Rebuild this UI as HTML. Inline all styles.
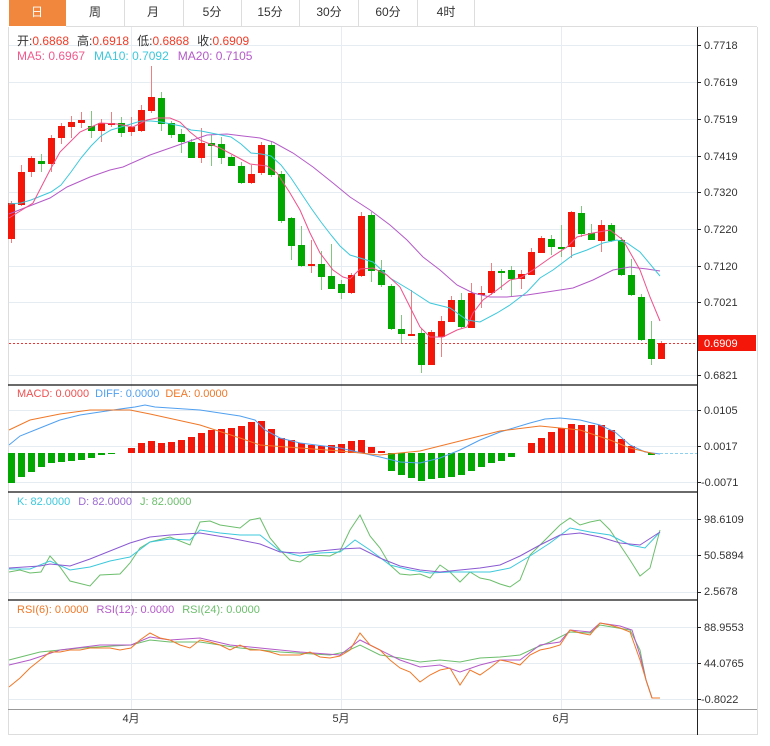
<!DOCTYPE html>
<html><head><meta charset="utf-8"><style>
html,body{margin:0;padding:0;background:#fff;width:770px;height:746px;overflow:hidden}
svg{display:block}
text{font-family:"Liberation Sans","Noto Sans CJK SC",sans-serif}
</style></head><body>
<svg width="770" height="746" viewBox="0 0 770 746" xmlns="http://www.w3.org/2000/svg">
<rect x="9" y="0" width="57" height="26" fill="#f0873c"/>
<g stroke="#ddd" stroke-width="1">
<line x1="124.5" y1="0" x2="124.5" y2="26"/><line x1="183.5" y1="0" x2="183.5" y2="26"/><line x1="241.5" y1="0" x2="241.5" y2="26"/><line x1="299.5" y1="0" x2="299.5" y2="26"/><line x1="358.5" y1="0" x2="358.5" y2="26"/><line x1="417.5" y1="0" x2="417.5" y2="26"/><line x1="474.5" y1="0" x2="474.5" y2="26"/>
<line x1="66" y1="26.5" x2="757" y2="26.5"/>
</g>
<g font-size="12" fill="#333" text-anchor="middle">
<text x="37" y="16" fill="#fff">日</text><text x="95" y="16">周</text><text x="153" y="16">月</text><text x="212" y="16">5分</text><text x="270" y="16">15分</text><text x="329" y="16">30分</text><text x="388" y="16">60分</text><text x="446" y="16">4时</text>
</g>
<g stroke="#ddd" fill="none"><line x1="8.5" y1="27" x2="8.5" y2="735"/><line x1="757.5" y1="27" x2="757.5" y2="735"/><line x1="8" y1="734.5" x2="758" y2="734.5"/></g>
<g stroke="#e6edf2" stroke-width="1">
<line x1="9" y1="45.5" x2="697" y2="45.5"/><line x1="9" y1="82.5" x2="697" y2="82.5"/><line x1="9" y1="119.5" x2="697" y2="119.5"/><line x1="9" y1="156.5" x2="697" y2="156.5"/><line x1="9" y1="192.5" x2="697" y2="192.5"/><line x1="9" y1="229.5" x2="697" y2="229.5"/><line x1="9" y1="266.5" x2="697" y2="266.5"/><line x1="9" y1="302.5" x2="697" y2="302.5"/><line x1="9" y1="339.5" x2="697" y2="339.5"/><line x1="9" y1="375.5" x2="697" y2="375.5"/>
<line x1="9" y1="410.5" x2="697" y2="410.5"/><line x1="9" y1="446.5" x2="697" y2="446.5"/><line x1="9" y1="482.5" x2="697" y2="482.5"/>
<line x1="9" y1="519.5" x2="697" y2="519.5"/><line x1="9" y1="555.5" x2="697" y2="555.5"/><line x1="9" y1="592.5" x2="697" y2="592.5"/>
<line x1="9" y1="627.5" x2="697" y2="627.5"/><line x1="9" y1="663.5" x2="697" y2="663.5"/><line x1="9" y1="699.5" x2="697" y2="699.5"/>
<line x1="131.5" y1="27" x2="131.5" y2="709"/><line x1="341.5" y1="27" x2="341.5" y2="709"/><line x1="561.5" y1="27" x2="561.5" y2="709"/>
</g>
<g stroke="#111" stroke-width="1.3"><line x1="8" y1="385" x2="697" y2="385"/><line x1="8" y1="492" x2="697" y2="492"/><line x1="8" y1="600" x2="697" y2="600"/></g>
<line x1="8" y1="709.5" x2="757" y2="709.5" stroke="#999"/>
<line x1="697.5" y1="27" x2="697.5" y2="735" stroke="#222"/>
<g stroke="#222"><line x1="697" y1="45.5" x2="701" y2="45.5"/><line x1="697" y1="82.5" x2="701" y2="82.5"/><line x1="697" y1="119.5" x2="701" y2="119.5"/><line x1="697" y1="156.5" x2="701" y2="156.5"/><line x1="697" y1="192.5" x2="701" y2="192.5"/><line x1="697" y1="229.5" x2="701" y2="229.5"/><line x1="697" y1="266.5" x2="701" y2="266.5"/><line x1="697" y1="302.5" x2="701" y2="302.5"/><line x1="697" y1="375.5" x2="701" y2="375.5"/><line x1="697" y1="410.5" x2="701" y2="410.5"/><line x1="697" y1="446.5" x2="701" y2="446.5"/><line x1="697" y1="482.5" x2="701" y2="482.5"/><line x1="697" y1="519.5" x2="701" y2="519.5"/><line x1="697" y1="555.5" x2="701" y2="555.5"/><line x1="697" y1="592.5" x2="701" y2="592.5"/><line x1="697" y1="627.5" x2="701" y2="627.5"/><line x1="697" y1="663.5" x2="701" y2="663.5"/><line x1="697" y1="699.5" x2="701" y2="699.5"/></g>
<g font-size="11" fill="#333">
<text x="704" y="49">0.7718</text><text x="704" y="86">0.7619</text><text x="704" y="123">0.7519</text><text x="704" y="160">0.7419</text><text x="704" y="196">0.7320</text><text x="704" y="233">0.7220</text><text x="704" y="270">0.7120</text><text x="704" y="306">0.7021</text><text x="704" y="379">0.6821</text>
<text x="704" y="414">0.0105</text><text x="704" y="450">0.0017</text><text x="701" y="486">-0.0071</text>
<text x="704" y="523">98.6109</text><text x="704" y="559">50.5894</text><text x="704" y="595">2.5678</text>
<text x="704" y="631">88.9553</text><text x="704" y="667">44.0765</text><text x="701" y="703">-0.8022</text>
</g>
<g font-size="11" fill="#333" text-anchor="middle"><text x="131" y="722">4月</text><text x="341" y="722">5月</text><text x="561" y="722">6月</text></g>
<line x1="9" y1="343.5" x2="697" y2="343.5" stroke="#e33" stroke-dasharray="2,2"/>
<rect x="698" y="335" width="58" height="16" fill="#f5160a"/>
<text x="704" y="347" font-size="11" fill="#fff">0.6909</text>
<g font-size="12">
<text x="17" y="45"><tspan fill="#333">开:</tspan><tspan fill="#f03c28">0.6868</tspan><tspan fill="#333" dx="8">高:</tspan><tspan fill="#f03c28">0.6918</tspan><tspan fill="#333" dx="8">低:</tspan><tspan fill="#f03c28">0.6868</tspan><tspan fill="#333" dx="8">收:</tspan><tspan fill="#f03c28">0.6909</tspan></text>
<text x="17" y="60"><tspan fill="#f05a8c">MA5: 0.6967</tspan><tspan fill="#3cc8dc" dx="9">MA10: 0.7092</tspan><tspan fill="#b45ac8" dx="9">MA20: 0.7105</tspan></text>
</g>
<g font-size="11">
<text x="17" y="397"><tspan fill="#f05050">MACD: 0.0000</tspan><tspan fill="#50a0f0" dx="6">DIFF: 0.0000</tspan><tspan fill="#f07828" dx="6">DEA: 0.0000</tspan></text>
<text x="17" y="505"><tspan fill="#3cc8dc">K: 82.0000</tspan><tspan fill="#9b6ad2" dx="8">D: 82.0000</tspan><tspan fill="#6cbe6c" dx="8">J: 82.0000</tspan></text>
<text x="17" y="613"><tspan fill="#f07828">RSI(6): 0.0000</tspan><tspan fill="#b45ac8" dx="8">RSI(12): 0.0000</tspan><tspan fill="#6cbe6c" dx="8">RSI(24): 0.0000</tspan></text>
</g>
<g stroke-width="1">
<g stroke="#f08080" fill="#f5160a">
<line x1="11.5" y1="201" x2="11.5" y2="243"/><rect x="8" y="203" width="7" height="36" stroke="none"/>
<line x1="21.5" y1="165" x2="21.5" y2="206"/><rect x="18" y="172" width="7" height="33" stroke="none"/>
<line x1="31.5" y1="156" x2="31.5" y2="177"/><rect x="28" y="158" width="7" height="14" stroke="none"/>
<line x1="51.5" y1="135" x2="51.5" y2="172"/><rect x="48" y="138" width="7" height="26" stroke="none"/>
<line x1="61.5" y1="123" x2="61.5" y2="144"/><rect x="58" y="126" width="7" height="12" stroke="none"/>
<line x1="71.5" y1="116" x2="71.5" y2="138"/><rect x="68" y="122" width="7" height="5" stroke="none"/>
<line x1="81.5" y1="112" x2="81.5" y2="128"/><rect x="78" y="120" width="7" height="3" stroke="none"/>
<line x1="101.5" y1="119" x2="101.5" y2="142"/><rect x="98" y="123" width="7" height="8" stroke="none"/>
<line x1="111.5" y1="112" x2="111.5" y2="127"/><rect x="108" y="123" width="7" height="2" stroke="none"/>
<line x1="131.5" y1="117" x2="131.5" y2="136"/><rect x="128" y="127" width="7" height="5" stroke="none"/>
<line x1="141.5" y1="105" x2="141.5" y2="132"/><rect x="138" y="110" width="7" height="21" stroke="none"/>
<line x1="151.5" y1="66" x2="151.5" y2="113"/><rect x="148" y="97" width="7" height="14" stroke="none"/>
<line x1="201.5" y1="128" x2="201.5" y2="163"/><rect x="198" y="143" width="7" height="15" stroke="none"/>
<line x1="251.5" y1="165" x2="251.5" y2="184"/><rect x="248" y="174" width="7" height="9" stroke="none"/>
<line x1="261.5" y1="142" x2="261.5" y2="175"/><rect x="258" y="145" width="7" height="28" stroke="none"/>
<line x1="311.5" y1="240" x2="311.5" y2="273"/><rect x="308" y="264" width="7" height="2" stroke="none"/>
<line x1="351.5" y1="273" x2="351.5" y2="294"/><rect x="348" y="275" width="7" height="18" stroke="none"/>
<line x1="361.5" y1="212" x2="361.5" y2="277"/><rect x="358" y="216" width="7" height="60" stroke="none"/>
<line x1="411.5" y1="290" x2="411.5" y2="336"/><rect x="408" y="334" width="7" height="2" stroke="none"/>
<line x1="431.5" y1="330" x2="431.5" y2="365"/><rect x="428" y="332" width="7" height="33" stroke="none"/>
<line x1="441.5" y1="316" x2="441.5" y2="357"/><rect x="438" y="321" width="7" height="16" stroke="none"/>
<line x1="451.5" y1="296" x2="451.5" y2="322"/><rect x="448" y="300" width="7" height="22" stroke="none"/>
<line x1="471.5" y1="283" x2="471.5" y2="328"/><rect x="468" y="293" width="7" height="35" stroke="none"/>
<line x1="481.5" y1="286" x2="481.5" y2="308"/><rect x="478" y="293" width="7" height="2" stroke="none"/>
<line x1="491.5" y1="263" x2="491.5" y2="295"/><rect x="488" y="271" width="7" height="22" stroke="none"/>
<line x1="521.5" y1="270" x2="521.5" y2="289"/><rect x="518" y="274" width="7" height="5" stroke="none"/>
<line x1="531.5" y1="248" x2="531.5" y2="275"/><rect x="528" y="252" width="7" height="23" stroke="none"/>
<line x1="541.5" y1="236" x2="541.5" y2="253"/><rect x="538" y="238" width="7" height="15" stroke="none"/>
<line x1="571.5" y1="211" x2="571.5" y2="258"/><rect x="568" y="212" width="7" height="35" stroke="none"/>
<line x1="601.5" y1="220" x2="601.5" y2="252"/><rect x="598" y="225" width="7" height="16" stroke="none"/>
<line x1="661.5" y1="341" x2="661.5" y2="359"/><rect x="658" y="343" width="7" height="16" stroke="none"/>
</g>
<g stroke="#80c880" fill="#00a800">
<line x1="41.5" y1="154" x2="41.5" y2="172"/><rect x="38" y="161" width="7" height="3" stroke="none"/>
<line x1="91.5" y1="111" x2="91.5" y2="138"/><rect x="88" y="126" width="7" height="5" stroke="none"/>
<line x1="121.5" y1="117" x2="121.5" y2="137"/><rect x="118" y="123" width="7" height="10" stroke="none"/>
<line x1="161.5" y1="92" x2="161.5" y2="131"/><rect x="158" y="98" width="7" height="26" stroke="none"/>
<line x1="171.5" y1="121" x2="171.5" y2="138"/><rect x="168" y="123" width="7" height="12" stroke="none"/>
<line x1="181.5" y1="129" x2="181.5" y2="153"/><rect x="178" y="134" width="7" height="8" stroke="none"/>
<line x1="191.5" y1="139" x2="191.5" y2="158"/><rect x="188" y="142" width="7" height="16" stroke="none"/>
<line x1="211.5" y1="135" x2="211.5" y2="166"/><rect x="208" y="143" width="7" height="3" stroke="none"/>
<line x1="221.5" y1="137" x2="221.5" y2="164"/><rect x="218" y="144" width="7" height="14" stroke="none"/>
<line x1="231.5" y1="155" x2="231.5" y2="166"/><rect x="228" y="157" width="7" height="9" stroke="none"/>
<line x1="241.5" y1="162" x2="241.5" y2="184"/><rect x="238" y="166" width="7" height="17" stroke="none"/>
<line x1="271.5" y1="142" x2="271.5" y2="177"/><rect x="268" y="145" width="7" height="30" stroke="none"/>
<line x1="281.5" y1="171" x2="281.5" y2="223"/><rect x="278" y="174" width="7" height="47" stroke="none"/>
<line x1="291.5" y1="217" x2="291.5" y2="260"/><rect x="288" y="218" width="7" height="28" stroke="none"/>
<line x1="301.5" y1="226" x2="301.5" y2="267"/><rect x="298" y="245" width="7" height="21" stroke="none"/>
<line x1="321.5" y1="251" x2="321.5" y2="290"/><rect x="318" y="264" width="7" height="13" stroke="none"/>
<line x1="331.5" y1="244" x2="331.5" y2="289"/><rect x="328" y="276" width="7" height="13" stroke="none"/>
<line x1="341.5" y1="280" x2="341.5" y2="299"/><rect x="338" y="284" width="7" height="9" stroke="none"/>
<line x1="371.5" y1="212" x2="371.5" y2="282"/><rect x="368" y="215" width="7" height="56" stroke="none"/>
<line x1="381.5" y1="260" x2="381.5" y2="287"/><rect x="378" y="270" width="7" height="15" stroke="none"/>
<line x1="391.5" y1="284" x2="391.5" y2="330"/><rect x="388" y="286" width="7" height="43" stroke="none"/>
<line x1="401.5" y1="315" x2="401.5" y2="343"/><rect x="398" y="329" width="7" height="5" stroke="none"/>
<line x1="421.5" y1="329" x2="421.5" y2="373"/><rect x="418" y="333" width="7" height="32" stroke="none"/>
<line x1="461.5" y1="293" x2="461.5" y2="328"/><rect x="458" y="300" width="7" height="27" stroke="none"/>
<line x1="501.5" y1="269" x2="501.5" y2="290"/><rect x="498" y="271" width="7" height="2" stroke="none"/>
<line x1="511.5" y1="266" x2="511.5" y2="297"/><rect x="508" y="270" width="7" height="9" stroke="none"/>
<line x1="551.5" y1="235" x2="551.5" y2="255"/><rect x="548" y="239" width="7" height="8" stroke="none"/>
<line x1="561.5" y1="225" x2="561.5" y2="257"/><rect x="558" y="247" width="7" height="2" stroke="none"/>
<line x1="581.5" y1="206" x2="581.5" y2="237"/><rect x="578" y="213" width="7" height="21" stroke="none"/>
<line x1="591.5" y1="224" x2="591.5" y2="240"/><rect x="588" y="233" width="7" height="7" stroke="none"/>
<line x1="611.5" y1="223" x2="611.5" y2="242"/><rect x="608" y="225" width="7" height="16" stroke="none"/>
<line x1="621.5" y1="237" x2="621.5" y2="276"/><rect x="618" y="240" width="7" height="35" stroke="none"/>
<line x1="631.5" y1="259" x2="631.5" y2="296"/><rect x="628" y="275" width="7" height="20" stroke="none"/>
<line x1="641.5" y1="294" x2="641.5" y2="341"/><rect x="638" y="297" width="7" height="43" stroke="none"/>
<line x1="651.5" y1="321" x2="651.5" y2="365"/><rect x="648" y="339" width="7" height="20" stroke="none"/>
</g>
</g>
<g fill="none" stroke-width="1">
<polyline stroke="#b45ac8" points="9,214 50,198 67,187 90,177 110,170 123,167 150,155 170,148 187,142 207,135 227,134 243,136 260,138 273,142 293,153 313,167 333,183 350,197 370,210 390,225 407,240 423,257 440,270 457,285 473,293 490,297 507,297 527,295 547,292 573,288 593,280 613,270 630,267 647,269 660,271"/>
<polyline stroke="#3cc8dc" points="9,204 21,203 31,200 41,196 51,192 61,185 71,172 81,158 91,146 101,136 111,130 121,127 131,124 141,121 151,121 161,122 171,124 181,126 191,130 201,131 211,133 221,135 231,137 241,144 251,153 261,154 271,156 281,165 291,178 301,193 311,208 321,222 331,235 340,246 350,255 373,262 390,278 410,290 430,303 450,308 467,320 480,322 497,313 510,305 527,292 540,278 553,270 573,255 587,250 603,243 617,240 627,243 640,252 660,276"/>
<polyline stroke="#f0508a" points="9,218 33,203 50,170 60,152 80,132 100,123 117,124 133,127 147,120 157,118 170,118 180,122 190,132 200,140 220,148 237,157 250,164 267,166 277,173 290,193 300,210 310,233 320,253 333,270 343,277 350,279 360,269 373,268 387,275 400,287 410,307 420,327 430,337 443,337 457,330 467,327 473,313 483,300 497,290 510,280 520,278 533,270 550,258 567,247 577,237 593,233 610,230 623,240 640,270 650,297 660,321"/>
</g>
<g fill="#00a800">
<rect x="8" y="453" width="7" height="30"/><rect x="18" y="453" width="7" height="24"/><rect x="28" y="453" width="7" height="19"/><rect x="38" y="453" width="7" height="14"/><rect x="48" y="453" width="7" height="10"/><rect x="58" y="453" width="7" height="9"/><rect x="68" y="453" width="7" height="8"/><rect x="78" y="453" width="7" height="7"/><rect x="88" y="453" width="7" height="5"/><rect x="98" y="453" width="7" height="2"/><rect x="108" y="453" width="7" height="1"/>
<rect x="388" y="453" width="7" height="18"/><rect x="398" y="453" width="7" height="22"/><rect x="408" y="453" width="7" height="25"/><rect x="418" y="453" width="7" height="28"/><rect x="428" y="453" width="7" height="26"/><rect x="438" y="453" width="7" height="25"/><rect x="448" y="453" width="7" height="24"/><rect x="458" y="453" width="7" height="22"/><rect x="468" y="453" width="7" height="18"/><rect x="478" y="453" width="7" height="14"/><rect x="488" y="453" width="7" height="10"/><rect x="498" y="453" width="7" height="8"/><rect x="508" y="453" width="7" height="4"/><rect x="648" y="453" width="7" height="2"/>
</g>
<g fill="#f5160a">
<rect x="128" y="448" width="7" height="5"/><rect x="138" y="443" width="7" height="10"/><rect x="148" y="441" width="7" height="12"/><rect x="158" y="443" width="7" height="10"/><rect x="168" y="442" width="7" height="11"/><rect x="178" y="440" width="7" height="13"/><rect x="188" y="437" width="7" height="16"/><rect x="198" y="433" width="7" height="20"/><rect x="208" y="430" width="7" height="23"/><rect x="218" y="429" width="7" height="24"/><rect x="228" y="428" width="7" height="25"/><rect x="238" y="426" width="7" height="27"/><rect x="248" y="422" width="7" height="31"/><rect x="258" y="421" width="7" height="32"/><rect x="268" y="429" width="7" height="24"/><rect x="278" y="438" width="7" height="15"/><rect x="288" y="440" width="7" height="13"/><rect x="298" y="443" width="7" height="10"/><rect x="308" y="445" width="7" height="8"/><rect x="318" y="446" width="7" height="7"/><rect x="328" y="445" width="7" height="8"/><rect x="338" y="444" width="7" height="9"/><rect x="348" y="441" width="7" height="12"/><rect x="358" y="440" width="7" height="13"/><rect x="368" y="447" width="7" height="6"/><rect x="378" y="451" width="7" height="2"/>
<rect x="528" y="443" width="7" height="10"/><rect x="538" y="438" width="7" height="15"/><rect x="548" y="432" width="7" height="21"/><rect x="558" y="428" width="7" height="25"/><rect x="568" y="424" width="7" height="29"/><rect x="578" y="425" width="7" height="28"/><rect x="588" y="425" width="7" height="28"/><rect x="598" y="425" width="7" height="28"/><rect x="608" y="430" width="7" height="23"/><rect x="618" y="439" width="7" height="14"/><rect x="628" y="446" width="7" height="7"/>
</g>
<line x1="660" y1="453.5" x2="697" y2="453.5" stroke="#8cd0f0" stroke-dasharray="3,2"/>
<g fill="none" stroke-width="1">
<polyline stroke="#50a0f0" points="9,445 20,436 40,428 60,420 80,415 100,412 120,409 135,407 145,405 155,407 170,408 200,410 240,416 255,420 265,430 280,438 300,443 340,448 380,457 400,462 420,463 440,458 460,450 480,440 500,432 530,423 545,419 560,418 580,420 600,425 615,432 630,445 645,452 660,454"/>
<polyline stroke="#f07828" points="9,430 30,420 60,414 90,410 130,410 150,414 200,425 240,438 260,445 300,448 340,451 380,455 420,451 460,441 500,431 540,426 580,430 610,440 630,448 655,454"/>
</g>
<g fill="none" stroke-width="1">
<polyline stroke="#6cbe6c" points="9,572 20,570 30,573 41,572 50,556 60,567 70,581 90,586 100,575 120,574 130,563 140,548 150,542 170,537 190,545 200,522 210,521 220,525 240,528 250,520 260,518 270,538 280,550 290,560 300,562 310,555 330,556 340,551 350,530 360,515 370,536 380,548 390,565 400,574 410,575 420,574 430,578 440,565 450,572 460,582 470,572 480,578 490,580 500,584 510,587 520,580 530,555 540,545 550,535 560,525 570,518 580,525 590,522 600,520 610,530 620,545 630,560 640,576 650,568 660,530"/>
<polyline stroke="#3cc8dc" points="9,569 30,569 50,561 70,570 90,567 110,561 130,557 150,542 170,539 190,540 200,530 220,533 240,535 260,535 280,551 300,556 320,553 340,552 355,540 370,550 390,565 410,570 430,573 450,572 470,572 490,572 510,568 530,556 550,543 570,528 590,532 610,535 630,545 645,548 660,532"/>
<polyline stroke="#8a5ad2" points="9,568 40,566 50,564 70,566 90,559 110,551 130,543 150,537 170,535 200,533 230,538 260,544 280,552 300,553 320,551 340,549 360,548 380,558 400,566 420,570 440,572 460,570 480,568 500,565 520,556 540,545 560,535 580,533 600,537 620,543 640,545 660,532"/>
</g>
<g fill="none" stroke-width="1">
<polyline stroke="#6cbe6c" points="9,660 40,652 80,648 131,645 150,640 170,642 200,642 240,648 280,652 330,655 345,652 360,645 380,655 400,658 420,662 440,660 460,662 480,658 500,657 520,655 535,648 550,642 570,632 590,633 600,625 630,630 640,650 646,680 652,698 660,698"/>
<polyline stroke="#b45ac8" points="9,665 30,660 60,650 100,645 131,645 150,637 170,640 200,638 230,645 260,648 300,652 340,655 360,640 380,650 400,660 420,667 440,665 460,672 480,665 500,660 520,660 540,645 560,642 570,630 590,632 600,623 620,626 632,630 640,655 646,680 652,698 660,698"/>
<polyline stroke="#f07828" points="9,687 20,678 30,668 40,660 50,652 60,652 70,650 80,650 90,648 100,648 110,648 120,650 131,648 140,640 150,633 160,638 170,640 180,645 190,648 200,640 210,642 220,645 230,650 240,645 250,650 260,650 270,652 280,655 300,655 310,652 320,657 330,658 340,656 350,650 360,633 370,645 380,650 390,660 400,668 410,672 420,682 430,675 440,670 450,668 460,685 470,670 480,675 490,668 500,660 510,662 520,665 530,655 540,650 550,648 560,645 570,630 580,633 590,635 600,623 610,625 620,628 630,632 640,660 646,680 652,698 660,698"/>
</g>
</svg>
</body></html>
